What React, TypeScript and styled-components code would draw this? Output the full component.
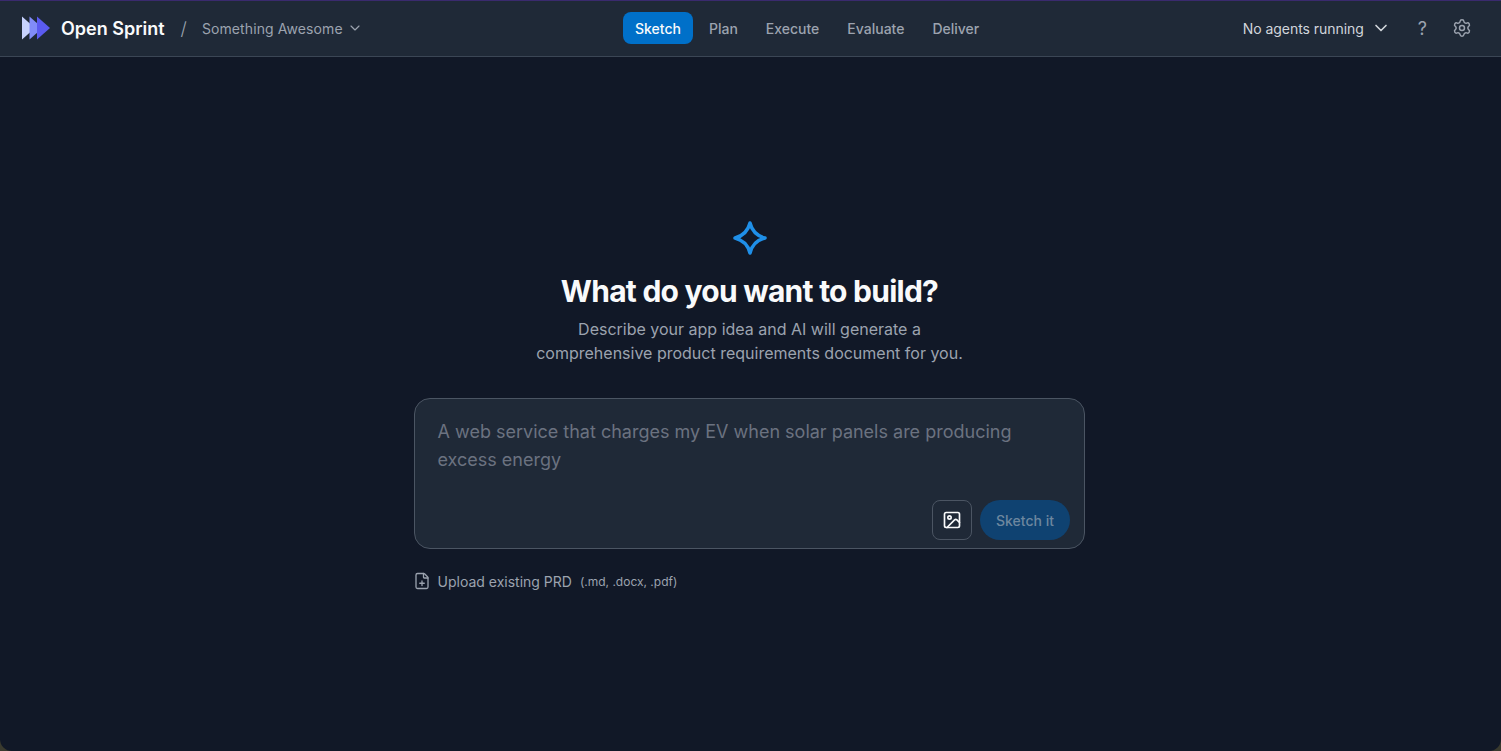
import styled, { createGlobalStyle } from 'styled-components';
import { ChevronDown, FilePlus, ImageIcon, Settings } from 'lucide-react';

const GlobalStyle = createGlobalStyle`
  html, body {
    margin: 0;
    height: 100%;
    background: #3a3a2e;
    font-family: Inter, "Liberation Sans", sans-serif;
  }
  #root {
    height: 100%;
  }
`;

const Page = styled.div`
  height: 751px;
  display: flex;
  flex-direction: column;
  overflow: hidden;
  background: #111827;
  border-radius: 0 0 12px 12px;
`;

const Navbar = styled.header`
  box-sizing: border-box;
  height: 57px;
  flex-shrink: 0;
  display: grid;
  grid-template-columns: 601px auto 1fr;
  align-items: center;
  padding: 0 29px 1px 22px;
  background: #1f2937;
  border-top: 1px solid #3a2a6e;
  border-bottom: 1px solid #3b4655;
`;

const Brand = styled.div`
  display: flex;
  align-items: center;
`;

const BrandName = styled.span`
  margin-left: 11px;
  font-size: 18px;
  font-weight: 600;
  color: #f9fafb;
`;

const Slash = styled.span`
  margin-left: 16px;
  font-size: 18px;
  font-weight: 300;
  color: #9ca3af;
`;

const ProjectPicker = styled.button`
  margin-left: 15px;
  padding: 0;
  display: flex;
  align-items: center;
  gap: 4px;
  border: 0;
  background: none;
  font: inherit;
  font-size: 14px;
  letter-spacing: 0.1px;
  color: #9ca3af;
`;

const Phases = styled.nav`
  display: flex;
  gap: 4px;
`;

const Phase = styled.button<{ $active?: boolean }>`
  height: 32px;
  padding: 0 12px;
  border: 0;
  border-radius: 8px;
  font: inherit;
  font-size: 14px;
  font-weight: 500;
  background: ${(p) => (p.$active ? '#0070c9' : 'transparent')};
  color: ${(p) => (p.$active ? '#f9fafb' : '#9ca3af')};
`;

const Tools = styled.div`
  display: flex;
  align-items: center;
  justify-content: flex-end;
`;

const AgentStatus = styled.button`
  padding: 0;
  display: flex;
  align-items: center;
  gap: 7px;
  border: 0;
  background: none;
  font: inherit;
  font-size: 14px;
  letter-spacing: -0.05px;
  color: #d1d5db;
`;

const HelpButton = styled.button`
  margin-left: 27px;
  padding: 0;
  border: 0;
  background: none;
  font: inherit;
  font-size: 18px;
  color: #9ca3af;
`;

const SettingsButton = styled.button`
  margin-left: 25px;
  padding: 0;
  display: flex;
  border: 0;
  background: none;
  color: #9ca3af;
`;

const Main = styled.main`
  flex: 1;
  display: flex;
  flex-direction: column;
  align-items: center;
  padding: 163px 2px 0 0;
`;

const Heading = styled.h1`
  margin: 17px 0 0;
  font-size: 30px;
  line-height: 36px;
  font-weight: 700;
  letter-spacing: -0.75px;
  color: #f9fafb;
`;

const Lead = styled.p`
  margin: 8px 0 0;
  font-size: 16px;
  line-height: 24px;
  text-align: center;
  color: #9ca3af;
`;

const Composer = styled.div`
  box-sizing: border-box;
  width: 671px;
  height: 151px;
  margin-top: 33px;
  padding: 19px 14px 8px 22.5px;
  display: flex;
  flex-direction: column;
  justify-content: space-between;
  border: 1px solid #4b5563;
  border-radius: 16px;
  background: #1f2937;
`;

const Prompt = styled.div`
  font-size: 18px;
  line-height: 28px;
  color: #6b7280;
`;

const Actions = styled.div`
  display: flex;
  justify-content: flex-end;
  gap: 8px;
`;

const AttachButton = styled.button`
  box-sizing: border-box;
  width: 40px;
  height: 40px;
  padding: 0;
  display: flex;
  align-items: center;
  justify-content: center;
  border: 1px solid #4b5563;
  border-radius: 8px;
  background: none;
  color: #f9fafb;
`;

const SubmitButton = styled.button`
  width: 90px;
  height: 40px;
  padding: 0;
  border: 0;
  border-radius: 20px;
  background: #0f4271;
  font: inherit;
  font-size: 14px;
  font-weight: 500;
  color: #6d879f;
`;

const UploadRow = styled.div`
  width: 671px;
  margin-top: 23px;
  display: flex;
  align-items: center;
  color: #9ca3af;

  svg {
    margin-left: -1.5px;
  }
`;

const UploadLabel = styled.span`
  margin-left: 7px;
  font-size: 14px;
`;

const UploadHint = styled.span`
  margin-left: 8px;
  font-size: 12px;
`;

function Logo() {
  return (
    <svg width="28" height="24" viewBox="0 0 28 24" aria-hidden="true">
      <path d="M0 0.5 L13 12 L0 23.5 Z" fill="#c7d2fe" />
      <path d="M7.5 0.5 L20.5 12 L7.5 23.5 Z" fill="#818cf8" />
      <path d="M15 0.5 L28 12 L15 23.5 Z" fill="#5b5bf0" />
    </svg>
  );
}

function Sparkle() {
  return (
    <svg width="36" height="36" viewBox="0 0 36 36" fill="none" aria-hidden="true">
      <path
        d="M18 3 Q21 15 33 18 Q21 21 18 33 Q15 21 3 18 Q15 15 18 3 Z"
        stroke="#1f8fe8"
        strokeWidth="3.5"
        strokeLinejoin="round"
      />
    </svg>
  );
}

export default function App() {
  return (
    <Page>
      <GlobalStyle />
      <Navbar>
        <Brand>
          <Logo />
          <BrandName>Open Sprint</BrandName>
          <Slash>/</Slash>
          <ProjectPicker>
            Something Awesome
            <ChevronDown size={16} strokeWidth={1.75} />
          </ProjectPicker>
        </Brand>
        <Phases>
          <Phase $active>Sketch</Phase>
          <Phase>Plan</Phase>
          <Phase>Execute</Phase>
          <Phase>Evaluate</Phase>
          <Phase>Deliver</Phase>
        </Phases>
        <Tools>
          <AgentStatus>
            No agents running
            <ChevronDown size={20} strokeWidth={2} />
          </AgentStatus>
          <HelpButton>?</HelpButton>
          <SettingsButton>
            <Settings size={20} strokeWidth={1.75} />
          </SettingsButton>
        </Tools>
      </Navbar>
      <Main>
        <Sparkle />
        <Heading>What do you want to build?</Heading>
        <Lead>
          Describe your app idea and AI will generate a
          <br />
          comprehensive product requirements document for you.
        </Lead>
        <Composer>
          <Prompt>
            A web service that charges my EV when solar panels are producing excess energy
          </Prompt>
          <Actions>
            <AttachButton>
              <ImageIcon size={20} strokeWidth={2} />
            </AttachButton>
            <SubmitButton>Sketch it</SubmitButton>
          </Actions>
        </Composer>
        <UploadRow>
          <FilePlus size={18} strokeWidth={1.75} />
          <UploadLabel>Upload existing PRD</UploadLabel>
          <UploadHint>(.md, .docx, .pdf)</UploadHint>
        </UploadRow>
      </Main>
    </Page>
  );
}
